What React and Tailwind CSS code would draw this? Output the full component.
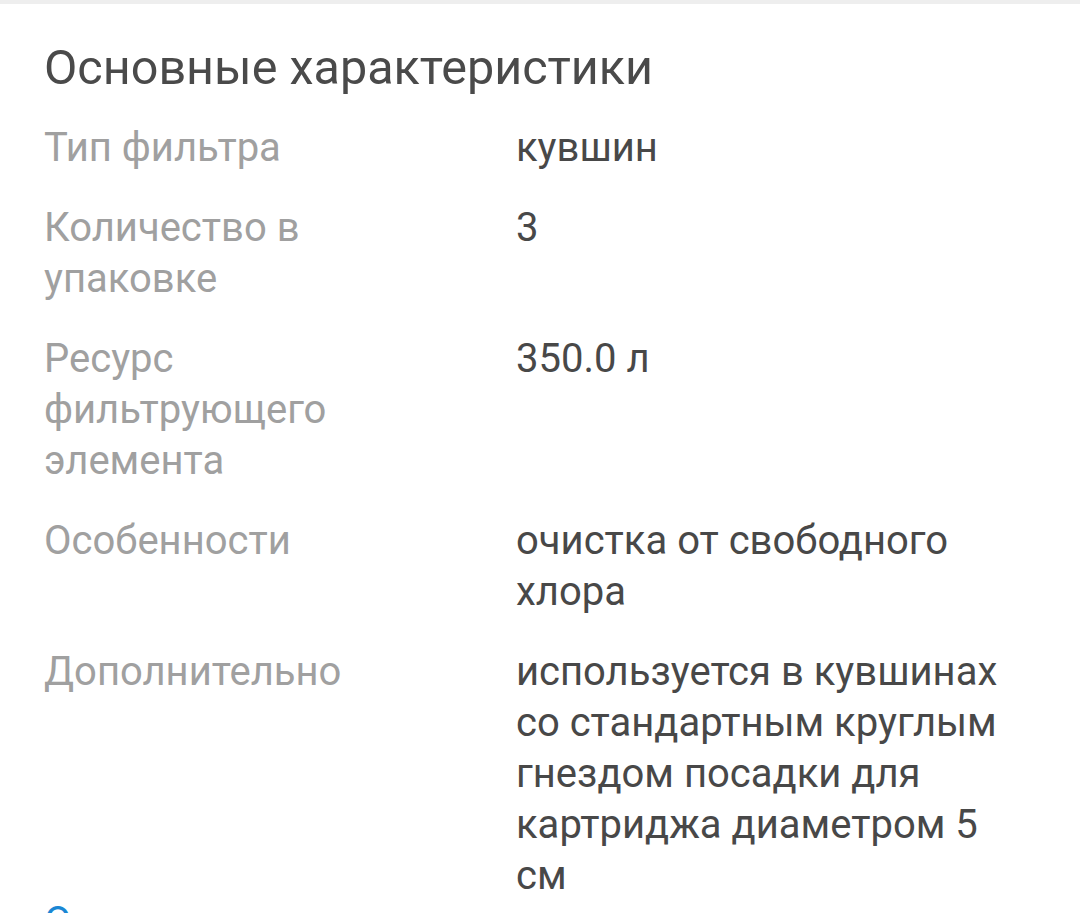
import React from "react";

const specs = [
  { label: "Тип фильтра", value: "кувшин" },
  { label: "Количество в упаковке", value: "3" },
  { label: "Ресурс фильтрующего элемента", value: "350.0 л" },
  { label: "Особенности", value: "очистка от свободного хлора" },
  {
    label: "Дополнительно",
    value:
      "используется в кувшинах со стандартным круглым гнездом посадки для картриджа диаметром 5 см",
  },
];

export default function App() {
  return (
    <div
      className="w-[1080px] h-[913px] overflow-hidden bg-white"
      style={{ fontFamily: "Roboto, 'Noto Sans', sans-serif" }}
    >
      <div className="h-[4px] bg-[#eeeeee]" />
      <section className="px-[44px] pt-[34px]">
        <h2 className="text-[48.5px] leading-[60px] text-[#4a4a4a]">
          Основные характеристики
        </h2>

        <div className="mt-[24px] grid grid-cols-[448px_1fr] gap-x-[24px] gap-y-[29px]">
          {specs.map((s) => (
            <React.Fragment key={s.label}>
              <div className="text-[40px] leading-[51px] text-[#a0a0a0] w-[300px]">
                {s.label}
              </div>
              <div className="text-[40px] leading-[51px] text-[#484848]">
                {s.value}
              </div>
            </React.Fragment>
          ))}
        </div>

        <div className="mt-[-5px] text-[40px] leading-[51px] text-[#1a87d4]">
          Описание
        </div>
      </section>
    </div>
  );
}
